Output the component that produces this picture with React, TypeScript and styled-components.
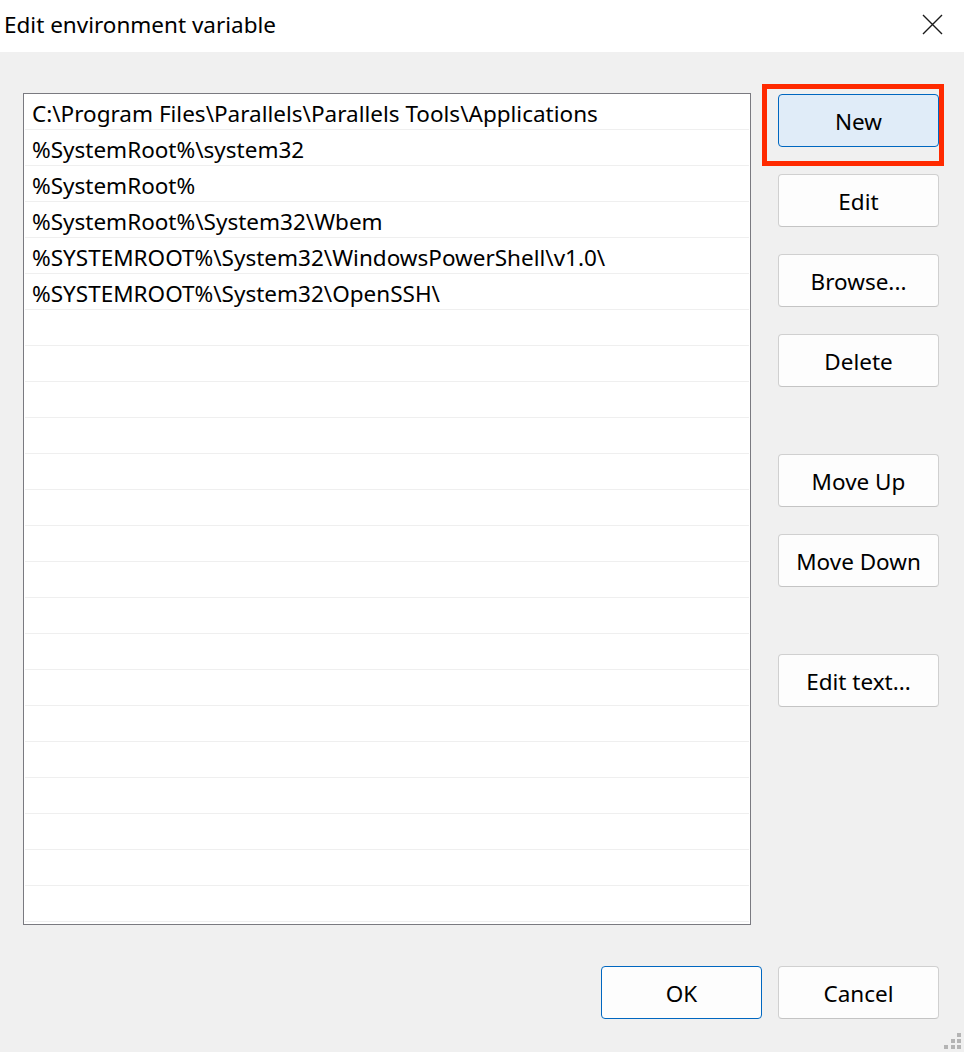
import React from "react";
import styled, { createGlobalStyle } from "styled-components";

const GlobalStyle = createGlobalStyle`
  html, body {
    margin: 0;
    padding: 0;
    background: #f0f0f0;
  }
  body {
    font-family: "Noto Sans", "Liberation Sans", sans-serif;
    color: #000;
  }
  * { box-sizing: border-box; }
`;

const Window = styled.div`
  width: 964px;
  height: 1052px;
  display: flex;
  flex-direction: column;
  background: #f0f0f0;
  position: relative;
  overflow: hidden;
`;

const TitleBar = styled.div`
  height: 52px;
  flex: none;
  background: #ffffff;
  display: flex;
  align-items: center;
  justify-content: space-between;
  padding-left: 4px;
  padding-right: 21px;
`;

const Title = styled.div`
  font-size: 22.5px;
  line-height: 1;
  margin-top: -1px;
`;

const CloseButton = styled.div`
  width: 22px;
  height: 22px;
  display: flex;
  align-items: center;
  justify-content: center;
  margin-top: -4px;
`;

const Body = styled.div`
  flex: 1;
  display: flex;
  flex-direction: column;
  padding: 41px 25px 0 23px;
`;

const Main = styled.div`
  display: flex;
  gap: 27px;
  align-items: flex-start;
`;

const ListBox = styled.div`
  width: 728px;
  height: 832px;
  background: #ffffff;
  border: 1px solid #7a7a80;
  padding: 0 1px;
  display: flex;
  flex-direction: column;
  overflow: hidden;
`;

const Row = styled.div`
  height: 36px;
  flex: none;
  border-bottom: 1px solid #efefef;
  display: flex;
  align-items: center;
  padding-left: 7px;
  padding-top: 4px;
  font-size: 22.5px;
  white-space: nowrap;
`;

const ButtonColumn = styled.div`
  width: 161px;
  display: flex;
  flex-direction: column;
  padding-top: 1px;
`;

const ButtonGroup = styled.div<{ $offset: number }>`
  display: flex;
  flex-direction: column;
  gap: 27px;
  margin-top: ${(p) => p.$offset}px;
`;

const Button = styled.div<{ $variant?: "accent" | "default" | "focus" }>`
  width: 161px;
  height: 53px;
  border-radius: 4px;
  display: flex;
  align-items: center;
  justify-content: center;
  font-size: 22.5px;
  padding-top: 2px;
  background: ${(p) => (p.$variant === "accent" ? "#e0ecf8" : "#fdfdfd")};
  border: 1px solid
    ${(p) => (p.$variant === "accent" || p.$variant === "focus" ? "#0067c0" : "#d0d0d0")};
  border-bottom-color: ${(p) =>
    p.$variant === "accent" || p.$variant === "focus" ? "#0067c0" : "#c4c4c4"};
`;

const Highlighted = styled.div`
  position: relative;
`;

const Annotation = styled.div`
  position: absolute;
  left: -16px;
  top: -10px;
  width: 182px;
  height: 82px;
  border: 5px solid #ff2a00;
  pointer-events: none;
`;

const Footer = styled.div`
  display: flex;
  justify-content: flex-end;
  gap: 16px;
  margin-top: 41px;
`;

const Grip = styled.div`
  position: absolute;
  right: 3px;
  bottom: 3px;
  width: 17px;
  height: 17px;
`;

const rows = [
  "C:\\Program Files\\Parallels\\Parallels Tools\\Applications",
  "%SystemRoot%\\system32",
  "%SystemRoot%",
  "%SystemRoot%\\System32\\Wbem",
  "%SYSTEMROOT%\\System32\\WindowsPowerShell\\v1.0\\",
  "%SYSTEMROOT%\\System32\\OpenSSH\\",
];

const TOTAL_ROWS = 23;

export default function App() {
  const allRows = Array.from({ length: TOTAL_ROWS }, (_, i) => rows[i] ?? "");
  return (
    <>
      <GlobalStyle />
      <Window>
        <TitleBar>
          <Title>Edit environment variable</Title>
          <CloseButton>
            <svg width="21" height="21" viewBox="0 0 21 21">
              <path d="M1 1 L20 20 M20 1 L1 20" stroke="#1a1a1a" strokeWidth="1.4" fill="none" />
            </svg>
          </CloseButton>
        </TitleBar>
        <Body>
          <Main>
            <ListBox>
              {allRows.map((r, i) => (
                <Row key={i}>{r}</Row>
              ))}
            </ListBox>
            <ButtonColumn>
              <ButtonGroup $offset={0}>
                <Highlighted>
                  <Button $variant="accent">New</Button>
                  <Annotation />
                </Highlighted>
                <Button>Edit</Button>
                <Button>Browse...</Button>
                <Button>Delete</Button>
              </ButtonGroup>
              <ButtonGroup $offset={67}>
                <Button>Move Up</Button>
                <Button>Move Down</Button>
              </ButtonGroup>
              <ButtonGroup $offset={67}>
                <Button>Edit text...</Button>
              </ButtonGroup>
            </ButtonColumn>
          </Main>
          <Footer>
            <Button $variant="focus">OK</Button>
            <Button>Cancel</Button>
          </Footer>
        </Body>
        <Grip>
          <svg width="17" height="17" viewBox="0 0 17 17">
            <g fill="#b4b4b4">
              <rect x="13" y="1" width="4" height="4" />
              <rect x="7" y="7" width="4" height="4" />
              <rect x="13" y="7" width="4" height="4" />
              <rect x="0" y="13" width="4" height="4" />
              <rect x="7" y="13" width="4" height="4" />
              <rect x="13" y="13" width="4" height="4" />
            </g>
          </svg>
        </Grip>
      </Window>
    </>
  );
}
